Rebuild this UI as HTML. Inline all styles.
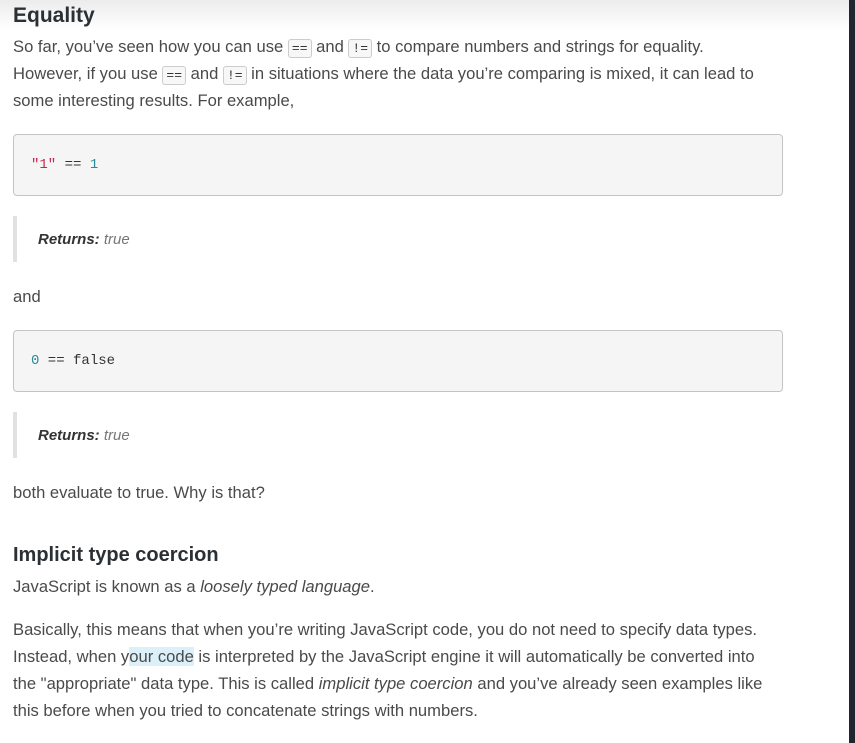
<!DOCTYPE html>
<html><head><meta charset="utf-8"><style>
html,body{margin:0;padding:0;width:855px;height:743px;overflow:hidden;background:#fff;font-family:"Liberation Sans",sans-serif;color:#4a4a4a}
.shadow{position:absolute;left:0;top:0;width:849px;height:30px;background:linear-gradient(#ececec,#fff)}
.bar{position:absolute;left:849px;top:0;width:6px;height:743px;background:#1f2630}
.t{position:absolute;left:13px;white-space:nowrap;font-size:16.6px;line-height:20px}
h1,h2{margin:0;position:absolute;left:13px;font-weight:bold;color:#2b3035;white-space:nowrap}
h1{font-size:21px;top:4px}
h2{font-size:20px;top:544px}
code.i{font-family:"Liberation Mono",monospace;font-size:13px;border:1px solid #ccc;border-radius:3px;background:#f7f7f7;padding:1px 3px;color:#333}
.pre{position:absolute;left:13px;width:768px;height:60px;background:#f5f5f5;border:1px solid #c4c4c4;border-radius:4px}
.pre span.c{position:absolute;left:17px;top:22px;font-family:"Liberation Mono",monospace;font-size:14px;color:#333;white-space:pre}
.bq{position:absolute;left:13px;width:4px;height:46px;background:#dfe1e5}
.ret{position:absolute;left:38px;font-size:15px;font-style:italic;color:#444}
.ret b{color:#333}
.ret span{color:#777;font-weight:normal}
.hl{background:#dcf0fa}
</style></head><body>
<div class="shadow"></div>
<div class="bar"></div>
<h1>Equality</h1>
<div class="t" style="top:37px">So far, you’ve seen how you can use <code class="i">==</code> and <code class="i">!=</code> to compare numbers and strings for equality.</div>
<div class="t" style="top:64px">However, if you use <code class="i">==</code> and <code class="i">!=</code> in situations where the data you’re comparing is mixed, it can lead to</div>
<div class="t" style="top:91px">some interesting results. For example,</div>
<div class="pre" style="top:134px"><span class="c"><span style="color:#c7254e">"1"</span> == <span style="color:#2a8a9a">1</span></span></div>
<div class="bq" style="top:216px"></div>
<div class="ret" style="top:231px"><b>Returns:</b> <span>true</span></div>
<div class="t" style="top:287px">and</div>
<div class="pre" style="top:330px"><span class="c"><span style="color:#2a8a9a">0</span> == false</span></div>
<div class="bq" style="top:412px"></div>
<div class="ret" style="top:427px"><b>Returns:</b> <span>true</span></div>
<div class="t" style="top:483px">both evaluate to true. Why is that?</div>
<h2>Implicit type coercion</h2>
<div class="t" style="top:577px">JavaScript is known as a <i>loosely typed language</i>.</div>
<div class="t" style="top:620px">Basically, this means that when you’re writing JavaScript code, you do not need to specify data types.</div>
<div class="t" style="top:647px">Instead, when y<span class="hl">our code</span> is interpreted by the JavaScript engine it will automatically be converted into</div>
<div class="t" style="top:674px">the "appropriate" data type. This is called <i>implicit type coercion</i> and you’ve already seen examples like</div>
<div class="t" style="top:701px">this before when you tried to concatenate strings with numbers.</div>
</body></html>
